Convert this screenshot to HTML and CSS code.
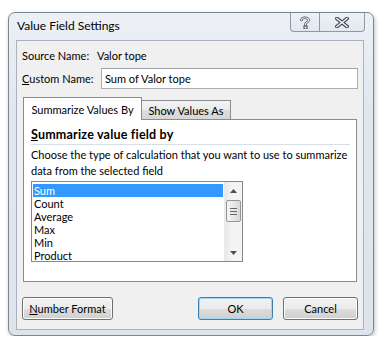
FILE: index.html
```html
<!DOCTYPE html>
<html lang="en">
<head>
  <meta charset="UTF-8">
  <title>Value Field Settings</title>
  <link rel="stylesheet" href="styles.css">
</head>
<body>
  <div class="window">
    <div class="titlebar">
      <span class="title">Value Field Settings</span>
      <div class="caption-buttons">
        <div class="cap-btn help">
          <svg width="10" height="13" viewBox="0 0 10 13">
            <path d="M1.5 4 C1.5 1 8.5 1 8.5 4 C8.5 6 5.5 6 5.5 8.5" fill="none" stroke="#3b4656" stroke-width="2.6" stroke-linecap="round"/>
            <path d="M1.5 4 C1.5 1 8.5 1 8.5 4 C8.5 6 5.5 6 5.5 8.5" fill="none" stroke="#f4f6f9" stroke-width="1.2" stroke-linecap="round"/>
            <rect x="4" y="10" width="3" height="3" fill="#f4f6f9" stroke="#3b4656" stroke-width="1"/>
          </svg>
        </div>
        <div class="cap-btn close">
          <svg width="14" height="11" viewBox="0 0 14 11">
            <path d="M2 1.5 L12 9.5 M12 1.5 L2 9.5" stroke="#3b4656" stroke-width="3.6" stroke-linecap="square"/>
            <path d="M2 1.5 L12 9.5 M12 1.5 L2 9.5" stroke="#f4f6f9" stroke-width="1.6" stroke-linecap="square"/>
          </svg>
        </div>
      </div>
    </div>

    <div class="client">
      <div class="row source-row">
        <span class="label">Source Name:</span>
        <span class="value">Valor tope</span>
      </div>
      <div class="row custom-row">
        <span class="label"><u>C</u>ustom Name:</span>
        <input type="text" class="name-input" value="Sum of Valor tope">
      </div>

      <div class="tabs">
        <div class="tab active">Summarize Values By</div>
        <div class="tab other">Show Values As</div>
      </div>
      <div class="tab-panel">
        <div class="group-title"><u>S</u>ummarize value field by</div>
        <div class="group-line"></div>
        <p class="hint">Choose the type of calculation that you want to use to summarize<br>data from the selected field</p>
        <div class="listbox">
          <ul class="items">
            <li class="selected">Sum</li>
            <li>Count</li>
            <li>Average</li>
            <li>Max</li>
            <li>Min</li>
            <li>Product</li>
          </ul>
          <div class="scrollbar">
            <div class="arrow up">
              <svg width="7" height="4" viewBox="0 0 7 4"><path d="M0 4 L3.5 0 L7 4 Z" fill="#4d4d4d"/></svg>
            </div>
            <div class="track">
              <div class="thumb"><span class="grip"></span></div>
            </div>
            <div class="arrow down">
              <svg width="7" height="4" viewBox="0 0 7 4"><path d="M0 0 L3.5 4 L7 0 Z" fill="#4d4d4d"/></svg>
            </div>
          </div>
        </div>
      </div>

      <div class="footer">
        <button class="btn number-btn"><u>N</u>umber Format</button>
        <div class="footer-right">
          <button class="btn default">OK</button>
          <button class="btn">Cancel</button>
        </div>
      </div>
    </div>
  </div>
</body>
</html>
```

FILE: styles.css
```css
body {
  margin: 0;
  background: #ffffff;
  font-family: Lato, "Noto Sans", sans-serif;
  font-size: 11px;
  color: #000;
}
.window {
  margin: 12px 0 0 8px;
  width: 366px;
  height: 324px;
  box-sizing: border-box;
  border: 1px solid #7c8592;
  border-radius: 7px;
  background: linear-gradient(to bottom, #edf1f6 0%, #e0e7ef 30%, #dde4ec 100%);
  padding: 0 9px 5px 7px;
  display: flex;
  flex-direction: column;
  box-shadow: 1px 2px 4px rgba(0,0,0,0.25);
}
.titlebar {
  height: 27px;
  display: flex;
  align-items: flex-start;
  justify-content: space-between;
}
.title {
  margin-top: 5px;
  margin-left: 1px;
  font-size: 12px;
}
.caption-buttons {
  display: flex;
  margin-right: -1px;
}
.cap-btn {
  height: 18px;
  border: 1px solid #8f99a6;
  border-top: none;
  display: flex;
  align-items: center;
  justify-content: center;
  background: linear-gradient(to bottom, #eef2f6, #e2e8ef);
}
.cap-btn.help {
  width: 28px;
  border-radius: 0 0 0 4px;
}
.cap-btn.close {
  width: 44px;
  border-left: none;
  border-radius: 0 0 4px 0;
}
.client {
  flex: 1;
  background: #f0f0f0;
  border: 1px solid #a9b3bf;
  padding: 0 5px;
  display: flex;
  flex-direction: column;
  white-space: nowrap;
}
.row {
  display: flex;
  align-items: center;
}
.label {
  flex: none;
}
.source-row {
  height: 16px;
  margin-top: 6px;
}
.source-row .label {
  width: 75px;
}
.custom-row {
  margin-top: 5px;
  height: 21px;
}
.custom-row .label {
  width: 79px;
}
.name-input {
  width: 258px;
  height: 21px;
  box-sizing: border-box;
  border: 1px solid #abadb3;
  border-top-color: #9ca0a8;
  background: #fff;
  font: inherit;
  padding: 0 3px;
  outline: none;
}
.tabs {
  display: flex;
  align-items: flex-end;
  margin-top: 8px;
  margin-left: 1px;
  height: 22px;
}
.tab {
  box-sizing: border-box;
  border: 1px solid #898c95;
  border-bottom: none;
  display: flex;
  align-items: center;
  justify-content: center;
}
.tab.active {
  width: 119px;
  height: 23px;
  background: #fff;
  position: relative;
  z-index: 1;
  margin-bottom: -1px;
}
.tab.other {
  width: 90px;
  height: 19px;
  margin-left: -1px;
  background: linear-gradient(to bottom, #f3f3f3, #ebebeb 50%, #dedede 51%, #d6d6d6);
}
.tab-panel {
  margin-left: 1px;
  width: 334px;
  height: 163px;
  box-sizing: border-box;
  border: 1px solid #898c95;
  background: #fff;
  padding: 7px 7px 0 7px;
}
.group-title {
  font-weight: bold;
  font-size: 12.5px;
  letter-spacing: 0.2px;
  height: 16px;
  line-height: 16px;
}
.group-line {
  margin-top: 1px;
  border-top: 1px solid #d5dfe5;
  width: 319px;
}
.hint {
  margin: 2px 0 0 0;
  line-height: 16px;
}
.listbox {
  margin-top: 2px;
  width: 212px;
  height: 81px;
  box-sizing: border-box;
  border: 1px solid #828790;
  display: flex;
  background: #fff;
}
.items {
  list-style: none;
  margin: 0;
  padding: 2px 1px 0 1px;
  flex: 1;
}
.items li {
  height: 13px;
  line-height: 13px;
  padding-left: 1px;
}
.items li.selected {
  background: #3399ff;
  color: #fff;
}
.scrollbar {
  width: 17px;
  display: flex;
  flex-direction: column;
  background: linear-gradient(to right, #e8e8e8, #f4f4f4 40%, #f4f4f4);
  border-left: 1px solid #eaeaea;
}
.arrow {
  height: 17px;
  display: flex;
  align-items: center;
  justify-content: center;
}
.track {
  flex: 1;
}
.thumb {
  margin: 1px 1px 0 1px;
  height: 20px;
  border: 1px solid #959595;
  border-radius: 2px;
  background: linear-gradient(to right, #f3f3f3, #e8e8e8 50%, #d8d8d8);
  display: flex;
  align-items: center;
  justify-content: center;
}
.grip {
  width: 7px;
  height: 5px;
  border-top: 1px solid #666;
  border-bottom: 1px solid #666;
  position: relative;
}
.grip::after {
  content: "";
  position: absolute;
  left: 0;
  right: 0;
  top: 2px;
  border-top: 1px solid #666;
}
.footer {
  margin-top: auto;
  margin-bottom: 9px;
  display: flex;
  justify-content: space-between;
}
.footer-right {
  display: flex;
  gap: 10px;
}
.btn {
  height: 23px;
  box-sizing: border-box;
  border: 1px solid #707070;
  border-radius: 3px;
  background: linear-gradient(to bottom, #f2f2f2 0%, #ebebeb 50%, #dddddd 51%, #cfcfcf 100%);
  font: inherit;
  color: #000;
  padding: 0;
  box-shadow: inset 0 0 0 1px #fcfcfc;
}
.number-btn {
  width: 91px;
}
.footer-right .btn {
  width: 75px;
}
.btn.default {
  border-color: #3c7fb1;
  box-shadow: inset 0 0 0 1px #9fd7f5;
}
```
